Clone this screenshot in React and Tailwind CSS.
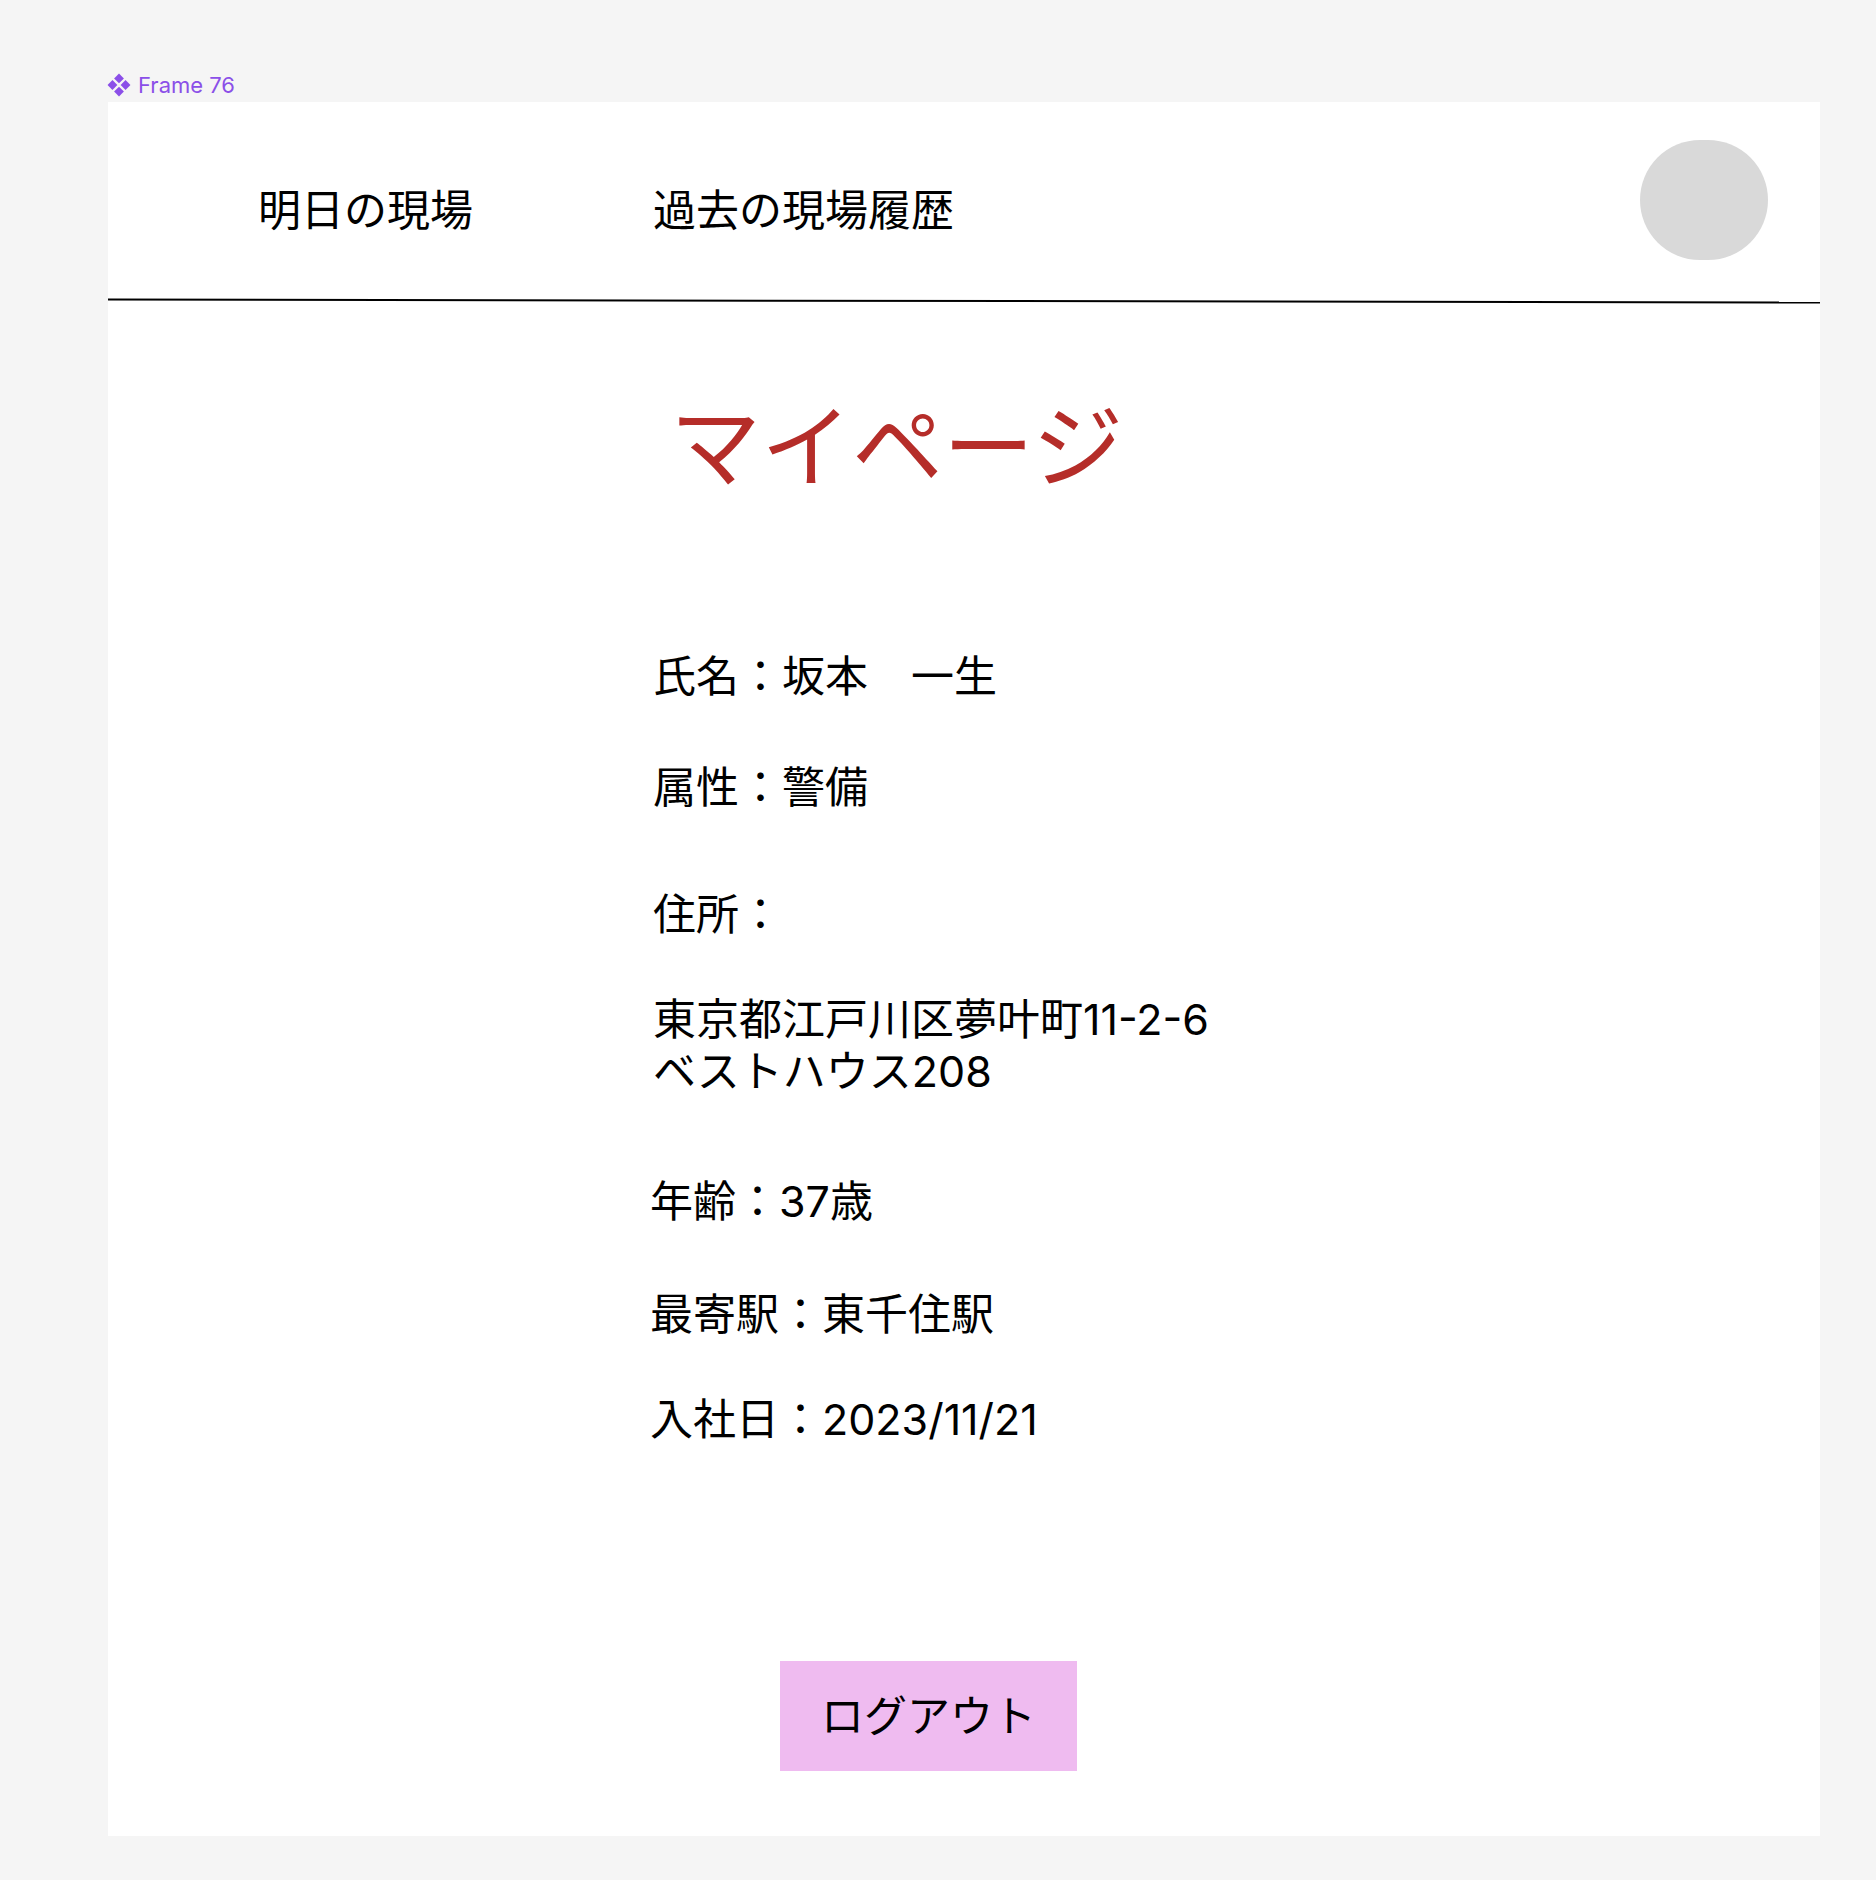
import React from "react";

const jp = { fontFamily: 'Inter, "Noto Sans CJK JP", sans-serif' };

function ComponentIcon() {
  return (
    <svg width="24" height="24" viewBox="0 0 22 22" className="shrink-0">
      <path d="M11 0.5 L15.5 5 L11 9.5 L6.5 5 Z" fill="#8b4fe8" />
      <path d="M11 12.5 L15.5 17 L11 21.5 L6.5 17 Z" fill="#8b4fe8" />
      <path d="M5 6.5 L9.5 11 L5 15.5 L0.5 11 Z" fill="#8b4fe8" />
      <path d="M17 6.5 L21.5 11 L17 15.5 L12.5 11 Z" fill="#8b4fe8" />
    </svg>
  );
}

export default function App() {
  return (
    <div className="w-[1876px] h-[1880px] bg-[#f5f5f5] pt-[73px]" style={jp}>
      <div className="ml-[107px] h-[24px] flex items-center gap-[7px] mb-[5px]">
        <ComponentIcon />
        <span
          className="text-[22px] leading-[24px] text-[#8b4fe8]"
          style={{ fontFamily: "Inter, sans-serif" }}
        >
          Frame 76
        </span>
      </div>

      <div className="ml-[108px] w-[1712px] h-[1734px] bg-white flex flex-col text-black">
        <header className="h-[198px] flex items-start">
          <div className="ml-[150px] mt-[82px] text-[43px] leading-[52px]">明日の現場</div>
          <div className="ml-[180px] mt-[82px] text-[43px] leading-[52px]">過去の現場履歴</div>
          <div className="ml-auto mr-[52px] mt-[38px] w-[128px] h-[120px] rounded-full bg-[#d9d9d9]" />
        </header>
        <div className="h-[2px] bg-black rotate-[0.1deg]" />

        <div className="pl-[545px] flex flex-col items-start">
          <h1 className="ml-[17px] mt-[91px] text-[91px] leading-[109px] text-[#b52d29] font-normal">
            マイページ
          </h1>

          <div className="mt-[148px] text-[43px] leading-[52px]">氏名：坂本　一生</div>
          <div className="mt-[59px] text-[43px] leading-[52px]">属性：警備</div>
          <div className="mt-[75px] text-[43px] leading-[52px]">住所：</div>
          <div className="mt-[53px] text-[43px] leading-[52px]">
            東京都江戸川区夢叶町11-2-6
            <br />
            ベストハウス208
          </div>
          <div className="-ml-[3px] mt-[78px] text-[43px] leading-[52px]">年齢：37歳</div>
          <div className="-ml-[3px] mt-[61px] text-[43px] leading-[52px]">最寄駅：東千住駅</div>
          <div className="-ml-[3px] mt-[53px] text-[43px] leading-[52px]">入社日：2023/11/21</div>

          <div className="ml-[127px] mt-[216px] w-[297px] h-[110px] bg-[#efbbf0] flex items-center justify-center text-[43px] leading-[52px]">
            ログアウト
          </div>
        </div>
      </div>
    </div>
  );
}
